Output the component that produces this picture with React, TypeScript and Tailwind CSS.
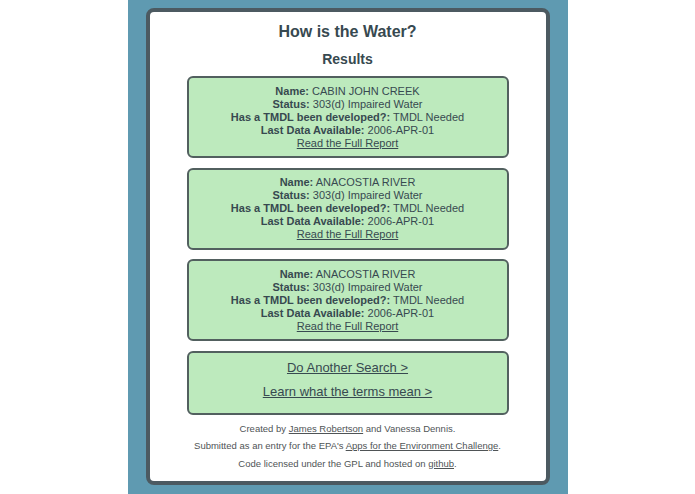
import React from 'react';

interface Water {
  name: string;
  status: string;
  tmdl: string;
  lastData: string;
}

const results: Water[] = [
  { name: 'CABIN JOHN CREEK', status: '303(d) Impaired Water', tmdl: 'TMDL Needed', lastData: '2006-APR-01' },
  { name: 'ANACOSTIA RIVER', status: '303(d) Impaired Water', tmdl: 'TMDL Needed', lastData: '2006-APR-01' },
  { name: 'ANACOSTIA RIVER', status: '303(d) Impaired Water', tmdl: 'TMDL Needed', lastData: '2006-APR-01' },
];

const App: React.FC = () => {
  return (
    <div className="flex h-[494px] w-full justify-center overflow-hidden bg-white font-['Liberation_Sans',Arial,sans-serif] text-[#374950]">
      <div className="h-full w-[440px] bg-[#5f9ab1] px-[18px] pt-2">
        <div className="h-[477px] rounded-lg border-4 border-[#4c5a61] bg-white px-[37px] pt-[10px]">
          <h1 className="text-center text-[16px] font-bold leading-[19px]">How is the Water?</h1>
          <h2 className="mt-[10px] text-center text-[14px] font-bold leading-[17px]">Results</h2>

          <div className="mt-[8px] flex flex-col gap-[9.5px]">
            {results.map((water, i) => (
              <div
                key={i}
                className="rounded-md border-2 border-[#52605f] bg-[#bdeabd] py-[6.5px] text-center text-[11px] leading-[13px]"
              >
                <div>
                  <b>Name:</b> {water.name}
                </div>
                <div>
                  <b>Status:</b> {water.status}
                </div>
                <div>
                  <b>Has a TMDL been developed?:</b> {water.tmdl}
                </div>
                <div>
                  <b>Last Data Available:</b> {water.lastData}
                </div>
                <a href="#" className="underline">
                  Read the Full Report
                </a>
              </div>
            ))}

            <div className="flex flex-col items-center gap-[9px] rounded-md border-2 border-[#52605f] bg-[#bdeabd] pb-[14px] pt-[7px] text-[13px] leading-[15px]">
              <a href="#" className="underline">
                Do Another Search &gt;
              </a>
              <a href="#" className="underline">
                Learn what the terms mean &gt;
              </a>
            </div>
          </div>

          <div className="mt-[5px] text-center text-[9.5px] leading-[17.5px] text-[#4f5456]">
            <p>
              Created by <a href="#" className="underline">James Robertson</a> and Vanessa Dennis.
            </p>
            <p>
              Submitted as an entry for the EPA's{' '}
              <a href="#" className="underline">Apps for the Environment Challenge</a>.
            </p>
            <p>
              Code licensed under the GPL and hosted on <a href="#" className="underline">github</a>.
            </p>
          </div>
        </div>
      </div>
    </div>
  );
};

export default App;
